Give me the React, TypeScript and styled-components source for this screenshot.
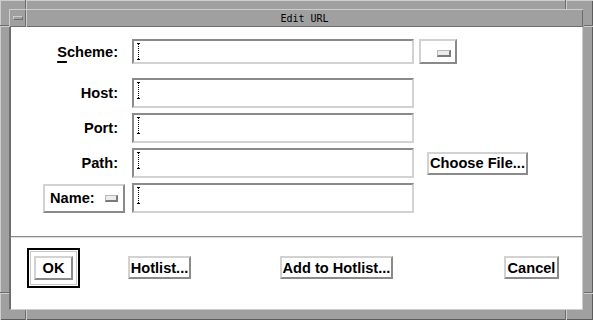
import React from "react";
import styled, { createGlobalStyle } from "styled-components";

const FRAME = "#a0a0a0";
const DARK = "#6e6e6e";
const LIGHT = "#cdcdcd";
const EDGE_DARK = "#8a8a8a";
const EDGE_LIGHT = "#d2d2d2";

const GlobalStyle = createGlobalStyle`
  html, body {
    margin: 0;
    padding: 0;
    background: ${FRAME};
  }
  body {
    font-family: "Liberation Sans", Arial, sans-serif;
  }
`;

const Window = styled.div`
  position: relative;
  box-sizing: border-box;
  width: 593px;
  height: 320px;
  padding: 9px 10px 10px 9px;
  background: ${FRAME};
  box-shadow: inset 1px 1px 0 ${LIGHT}, inset -1px -1px 0 #5c5c5c;
  display: flex;
  flex-direction: column;
`;

// resize-handle notches cut into the window frame
const Notch = styled.span<{ $x: number; $y: number; $len: number; $vertical?: boolean }>`
  position: absolute;
  left: ${(p) => p.$x}px;
  top: ${(p) => p.$y}px;
  box-sizing: border-box;
  width: ${(p) => (p.$vertical ? 2 : p.$len)}px;
  height: ${(p) => (p.$vertical ? p.$len : 2)}px;
  ${(p) =>
    p.$vertical
      ? `border-left: 1px solid ${DARK}; border-right: 1px solid ${LIGHT};`
      : `border-top: 1px solid ${DARK}; border-bottom: 1px solid ${LIGHT};`}
`;

const TitleBar = styled.div`
  display: flex;
  height: 18px;
  flex: none;
`;

const MenuButton = styled.div`
  box-sizing: border-box;
  width: 17px;
  height: 18px;
  display: flex;
  align-items: center;
  justify-content: center;
  box-shadow: inset 1px 1px 0 ${LIGHT}, inset -1px -1px 0 ${DARK};
`;

const MenuGlyph = styled.span`
  box-sizing: border-box;
  width: 10px;
  height: 4px;
  border: 1px solid;
  border-color: ${LIGHT} ${DARK} ${DARK} ${LIGHT};
`;

const TitleArea = styled.div`
  flex: 1;
  display: flex;
  align-items: center;
  justify-content: center;
  box-shadow: inset 1px 1px 0 ${LIGHT}, inset -1px -1px 0 ${DARK};
  font-family: "DejaVu Sans Mono", "Liberation Mono", monospace;
  font-size: 10px;
  color: #000;
`;

const Client = styled.div`
  flex: 1;
  display: flex;
  flex-direction: column;
  background: #fff;
  border-left: 2px solid ${DARK};
  border-right: 1px solid ${LIGHT};
  border-bottom: 1px solid ${LIGHT};
`;

const Form = styled.div`
  box-sizing: border-box;
  height: 209px;
  flex: none;
  padding-top: 12px;
  display: flex;
  flex-direction: column;
  gap: 5px;
`;

const Row = styled.div<{ $h: number; $spaced?: boolean }>`
  display: grid;
  grid-template-columns: 116px 282px auto;
  column-gap: 5px;
  align-items: center;
  height: ${(p) => p.$h}px;
  margin-bottom: ${(p) => (p.$spaced ? 9 : 0)}px;
`;

const Label = styled.span`
  justify-self: end;
  padding-right: 9px;
  font-size: 14.6px;
  font-weight: bold;
  color: #000;

  u {
    text-decoration-thickness: 2px;
    text-underline-offset: 4px;
  }
`;

const Field = styled.div`
  box-sizing: border-box;
  height: 100%;
  display: flex;
  align-items: flex-start;
  padding: 2px 2px;
  background: #fff;
  border: 2px solid;
  border-color: ${EDGE_DARK} ${EDGE_LIGHT} ${EDGE_LIGHT} ${EDGE_DARK};
`;

const raised = `
  box-sizing: border-box;
  border: 2px solid;
  border-color: ${EDGE_LIGHT} ${EDGE_DARK} ${EDGE_DARK} ${EDGE_LIGHT};
  background: #fff;
`;

const OptionMenu = styled.div`
  ${raised}
  width: 38px;
  height: 100%;
  display: flex;
  align-items: center;
  justify-content: flex-end;
  padding: 3px 4px 0 0;
`;

const NameMenu = styled.div`
  ${raised}
  justify-self: end;
  margin-right: 2px;
  width: 82px;
  height: 29px;
  display: flex;
  align-items: center;
  padding-left: 5px;
  font-size: 14.6px;
  font-weight: bold;
  gap: 10px;
`;

const Indicator = styled.span<{ $w: number }>`
  box-sizing: border-box;
  width: ${(p) => p.$w}px;
  height: 7px;
  background: #ececec;
  border: 1px solid #b8b8b8;
  border-right: 2px solid #7a7a7a;
  border-bottom: 2px solid #7a7a7a;
`;

const PushButton = styled.button<{ $w: number; $ml?: number }>`
  ${raised}
  width: ${(p) => p.$w}px;
  height: ${(p) => (p.$w > 40 ? 23 : 24)}px;
  margin: 0 0 0 ${(p) => p.$ml ?? 0}px;
  padding: 0;
  font-family: "Liberation Sans", Arial, sans-serif;
  font-size: 14.6px;
  font-weight: bold;
  color: #000;
  white-space: nowrap;
  cursor: default;
`;

const Divider = styled.div`
  height: 0;
  flex: none;
  border-top: 1px solid #8c8c8c;
  border-bottom: 1px solid #dcdcdc;
`;

const ButtonBar = styled.div`
  flex: 1;
  display: flex;
  align-items: center;
  padding: 0 0 12px 16px;
`;

const DefaultRing = styled.div`
  border: 2px solid #000;
  padding: 1px;
  display: flex;
`;

const DefaultInner = styled.div`
  border: 1px solid #c8c8c8;
  padding: 4px 3px;
  display: flex;
`;

function TextCursor() {
  return (
    <svg width="5" height="17" viewBox="0 0 5 17">
      <path d="M1 0.5h3M1 16.5h3" stroke="#000" strokeWidth="1" />
      <line x1="2.5" y1="1" x2="2.5" y2="16" stroke="#000" strokeWidth="1" strokeDasharray="1 1" />
    </svg>
  );
}

function Entry() {
  return (
    <Field>
      <TextCursor />
    </Field>
  );
}

export default function App() {
  return (
    <>
      <GlobalStyle />
      <Window>
        <Notch $x={25} $y={0} $len={9} $vertical />
        <Notch $x={565} $y={0} $len={9} $vertical />
        <Notch $x={0} $y={25} $len={9} />
        <Notch $x={584} $y={25} $len={9} />
        <Notch $x={0} $y={292} $len={9} />
        <Notch $x={584} $y={292} $len={9} />
        <Notch $x={25} $y={310} $len={10} $vertical />
        <Notch $x={565} $y={310} $len={10} $vertical />

        <TitleBar>
          <MenuButton>
            <MenuGlyph />
          </MenuButton>
          <TitleArea>Edit URL</TitleArea>
        </TitleBar>

        <Client>
          <Form>
            <Row $h={25} $spaced>
              <Label>
                <u>S</u>cheme:
              </Label>
              <Entry />
              <OptionMenu>
                <Indicator $w={14} />
              </OptionMenu>
            </Row>
            <Row $h={30}>
              <Label>Host:</Label>
              <Entry />
            </Row>
            <Row $h={30}>
              <Label>Port:</Label>
              <Entry />
            </Row>
            <Row $h={30}>
              <Label>Path:</Label>
              <Entry />
              <PushButton $w={101} $ml={8}>
                Choose File...
              </PushButton>
            </Row>
            <Row $h={30}>
              <NameMenu>
                Name:
                <Indicator $w={13} />
              </NameMenu>
              <Entry />
            </Row>
          </Form>

          <Divider />

          <ButtonBar>
            <DefaultRing>
              <DefaultInner>
                <PushButton $w={39}>OK</PushButton>
              </DefaultInner>
            </DefaultRing>
            <PushButton $w={63} $ml={48}>
              Hotlist...
            </PushButton>
            <PushButton $w={113} $ml={89}>
              Add to Hotlist...
            </PushButton>
            <PushButton $w={55} $ml={111}>
              Cancel
            </PushButton>
          </ButtonBar>
        </Client>
      </Window>
    </>
  );
}
